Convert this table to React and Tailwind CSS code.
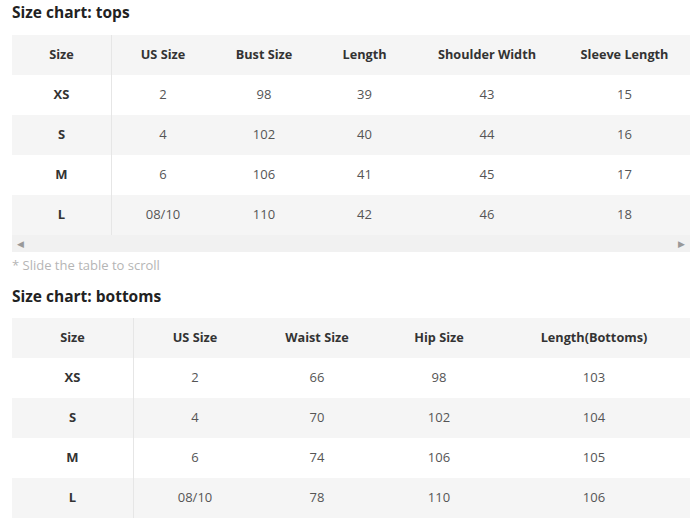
import React from "react";

const tops = {
  cols: ["w-[100px]", "w-[102px]", "w-[100px]", "w-[101px]", "w-[144px]", "w-[131px]"],
  head: ["Size", "US Size", "Bust Size", "Length", "Shoulder Width", "Sleeve Length"],
  rows: [
    ["XS", "2", "98", "39", "43", "15"],
    ["S", "4", "102", "40", "44", "16"],
    ["M", "6", "106", "41", "45", "17"],
    ["L", "08/10", "110", "42", "46", "18"],
  ],
};

const bottoms = {
  cols: ["w-[122px]", "w-[122px]", "w-[122px]", "w-[122px]", "w-[188px]"],
  head: ["Size", "US Size", "Waist Size", "Hip Size", "Length(Bottoms)"],
  rows: [
    ["XS", "2", "66", "98", "103"],
    ["S", "4", "70", "102", "104"],
    ["M", "6", "74", "106", "105"],
    ["L", "08/10", "78", "110", "106"],
  ],
};

const Row = ({ cells, cols, header, gray }) => (
  <div className={`flex h-[40px] ${gray ? "bg-[#f5f5f5]" : "bg-white"}`}>
    {cells.map((c, i) => (
      <div
        key={i}
        className={`${cols[i]} shrink-0 flex items-center justify-center ${
          i === 0 ? "border-r border-[#e6e6e6]" : ""
        } ${header ? "font-bold text-[#333] text-[12.7px]" : i === 0 ? "font-bold text-[#333]" : "text-[#555]"}`}
      >
        {c}
      </div>
    ))}
  </div>
);

const SizeTable = ({ data }) => (
  <div>
    <Row cells={data.head} cols={data.cols} header gray />
    {data.rows.map((r, i) => (
      <Row key={i} cells={r} cols={data.cols} gray={i % 2 === 1} />
    ))}
  </div>
);

export default function App() {
  return (
    <div className="w-[690px] h-[520px] overflow-hidden bg-white pl-[12px] text-[13px] font-['Open_Sans',sans-serif]">
      <h2 className="text-[15.5px] leading-[24px] font-bold text-[#222]">Size chart: tops</h2>
      <div className="mt-[11px]">
        <SizeTable data={tops} />
        {/* fake horizontal scrollbar */}
        <div className="flex h-[17px] items-center justify-between bg-[#f1f1f1] px-[5px] text-[9px] text-[#999]">
          <span>◀</span>
          <span>▶</span>
        </div>
      </div>
      <p className="mt-[3px] leading-[20px] text-[#b5b5b5]">* Slide the table to scroll</p>
      <h2 className="mt-[9px] text-[15.5px] leading-[24px] font-bold text-[#222]">Size chart: bottoms</h2>
      <div className="mt-[10px]">
        <SizeTable data={bottoms} />
      </div>
    </div>
  );
}
